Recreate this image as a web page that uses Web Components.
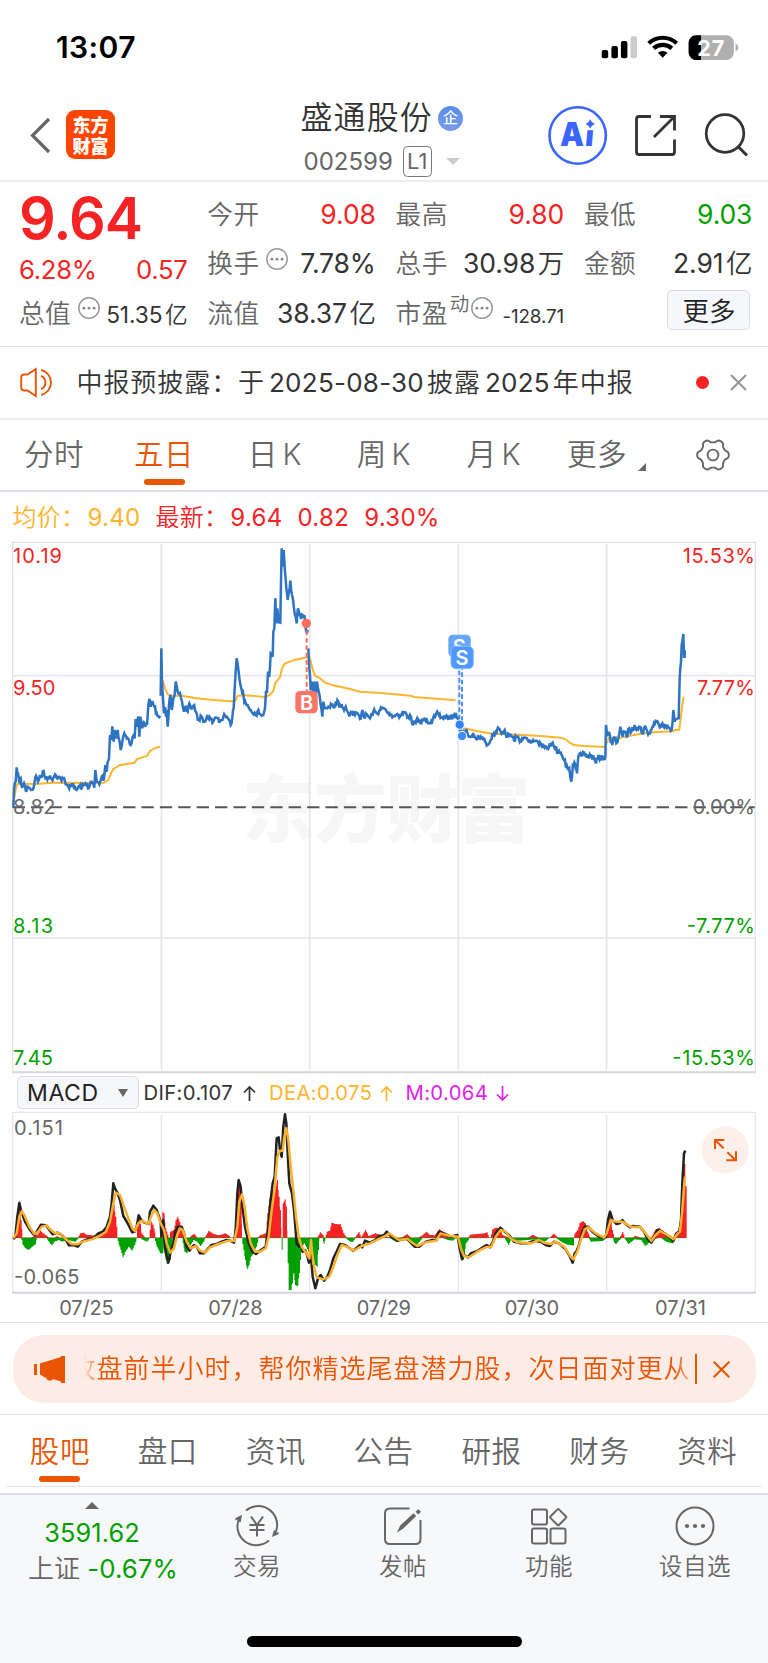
<!DOCTYPE html>
<html lang="zh-CN">
<head>
<meta charset="utf-8">
<meta name="viewport" content="width=device-width">
<title>盛通股份 002599</title>
<style>
html,body{margin:0;background:#fff}
body{width:768px;height:1663px;overflow:hidden;font-family:Inter,"Noto Sans CJK SC",sans-serif;font-weight:350;color:#333;text-autospace:no-autospace}
</style>
</head>
<body>
<stock-app></stock-app>
<script>
const BASE = '*{box-sizing:border-box}:host{display:block}svg{display:block;flex:none;overflow:visible}';
function define(name, css, html, init) {
  const t = document.createElement('template');
  t.innerHTML = '<style>' + BASE + css + '</style>' + html;
  customElements.define(name, class extends HTMLElement {
    connectedCallback() {
      if (this.shadowRoot) return;
      this.attachShadow({ mode: 'open' }).append(t.content.cloneNode(true));
      if (init) init.call(this, this.shadowRoot);
    }
  });
}

define('status-bar', `
:host{height:90px;display:flex;justify-content:space-between;align-items:flex-start;padding:29px 30px 0 56px}
b{font-size:30px;line-height:37px;font-weight:600;color:#000;letter-spacing:.4px}
svg{margin-top:5px}`,
`<b>13:07</b>
<svg width="137" height="28" viewBox="0 0 137 28">
<g transform="translate(.7 0)"><rect x="0" y="16" width="6.5" height="8.3" rx="2"/><rect x="9.7" y="12" width="6.5" height="12.3" rx="2"/><rect x="19.2" y="7" width="6.5" height="17.3" rx="2"/><rect x="28.8" y="2.2" width="6.5" height="22.1" rx="2" fill="#ccc"/></g>
<g transform="translate(.7 0)"><g fill="none" stroke="#000" stroke-width="4.2"><path d="M47 9.3A20.5 20.5 0 0 1 75 9.3"/><path d="M51.9 14.4A13.3 13.3 0 0 1 70.1 14.4"/></g><path d="M56.2 18.8A7 7 0 0 1 65.8 18.8L61 23.8Z"/></g>
<rect x="87.6" y="1.2" width="45.3" height="24.8" rx="7.5" fill="#b0b0b0"/><path d="M100 1.2H95A7.5 7.5 0 0 0 87.6 8.7V18.5A7.5 7.5 0 0 0 95 26H100Z"/><path d="M134.5 9.5C138.3 11 138.3 16 134.5 17.5Z" fill="#b0b0b0"/>
<text x="96.2" y="21.7" font-family="Inter" font-weight="700" font-size="21.5" fill="#fff" textLength="27">27</text></svg>`);

define('app-header', `
:host{height:92px;border-bottom:2px solid #ececec;display:grid;grid-template-columns:300.5px 201.5px 1fr;align-items:start}
.l{display:flex;padding:20px 0 0 30px;gap:15px}
.logo{width:49px;height:49px;border-radius:9px;background:#ff4400;color:#fff;font:900 18px/20.5px "Noto Sans CJK SC",sans-serif;display:flex;flex-direction:column;align-items:center;justify-content:center}
.n{display:flex;align-items:center;gap:5px;height:44px;margin-top:6px;font-size:32px;line-height:44px;color:#333;letter-spacing:1.1px}
.badge{width:25px;height:25px;border-radius:50%;background:linear-gradient(#5a8cec,#769ce8);color:#fff;font-size:15px;line-height:24px;font-weight:500;text-align:center;letter-spacing:0}
.c{display:flex;align-items:center;color:#666;font-size:24px;line-height:30px;padding-left:3px;margin-top:6px;font-weight:400;letter-spacing:0}
.c i{font-style:normal;margin-left:10px;width:29px;height:31px;border:1.3px solid #777;border-radius:4.5px;font-size:22px;line-height:29px;text-align:center}
.tri{margin-left:14.5px;border:7px solid transparent;border-top:7px solid #ccc;border-bottom:0}
.r{display:flex;padding:15px 0 0 46px}`,
`<div class="l"><svg width="21" height="49" viewBox="0 0 21 49"><path d="M19 9L2.5 25.5 19 42" fill="none" stroke="#666" stroke-width="3.2"/></svg><div class="logo"><span>东方</span><span>财富</span></div></div>
<div><div class="n"><span>盛通股份</span><span class="badge">企</span></div><div class="c"><span>002599</span><i>L1</i><span class="tri"></span></div></div>
<div class="r"><svg width="220" height="62" viewBox="0 0 220 62">
<circle cx="29.7" cy="30.5" r="28.2" fill="none" stroke="#3a66ff" stroke-width="2.6"/>
<text x="12" y="41" font-family="Inter" font-weight="900" font-size="33" textLength="24" lengthAdjust="spacingAndGlyphs" fill="#3a66ff">A</text><text x="38" y="41.3" font-family="Inter" font-weight="900" font-size="29" fill="#3a66ff" transform="skewX(-5) translate(2 0)">ı</text><path d="M42.2 14.3Q43.4 17.7 46.8 18.9 43.4 20.1 42.2 23.5 41 20.1 37.6 18.9 41 17.7 42.2 14.3Z" fill="#3a66ff"/>
<g fill="none" stroke="#333" stroke-width="2.8"><path d="M103 11.5H91Q88.5 11.5 88.5 14V47Q88.5 49.5 91 49.5H124Q126.5 49.5 126.5 47V34.5M112 11.5H126.5V25.5M126 12L106 32"/><circle cx="177" cy="28.5" r="18.8" stroke-width="2.7"/><path d="M189.5 41L199 50.5" stroke-width="3"/></g></svg></div>`);

define('info-dot', `:host{width:22px;height:22px;flex:none}`,
`<svg width="22" height="22" viewBox="0 0 22 22"><circle cx="11" cy="11" r="10.2" fill="none" stroke="#999" stroke-width="1.5"/><g fill="#888"><circle cx="5.9" cy="11.2" r="1.4"/><circle cx="11" cy="11.2" r="1.4"/><circle cx="16.1" cy="11.2" r="1.4"/></g></svg>`);

define('quote-cell', `
:host{display:flex;justify-content:space-between;align-items:baseline;height:49.3px;line-height:49.3px;white-space:nowrap}
.k{font-size:25.7px;color:#666;display:flex;align-items:center;letter-spacing:.4px}
.v{font-size:26.5px;color:#333;font-weight:400;letter-spacing:-.1px}
:host([tone=up]) .v{color:#f52323}:host([tone=down]) .v{color:#00a000}
:host([size=m]) .v{font-size:22.7px}:host([size=s]) .v{font-size:18.8px}
`, `<span class="k"><slot name="k"></slot></span><span class="v"><slot></slot></span>`);

define('quote-panel', `
:host{height:165px;border-bottom:1.5px solid #e2e3e8;display:grid;grid-template-columns:168.5px 168.5px 168.5px 168.5px;column-gap:19.8px;padding:8px 0 0 19px}
.big{font-size:57.5px;line-height:58px;height:58px;margin:-1px 0 0 0;font-weight:600;color:#f52323;letter-spacing:-1px}
.p{display:flex;justify-content:space-between;color:#f52323;font-size:25.7px;line-height:45px;height:41.6px;font-weight:400;letter-spacing:-.3px}
info-dot{margin:-10px 0 0 7px}
.sup{font-size:19.5px;margin:-18px 0 0 2px}
.sup + info-dot{margin-left:1px}
button{display:block;margin:1px 2px 0 auto;width:83px;height:40px;border:1.5px solid #dcdde4;border-radius:5px;background:#f6f7fa;font:350 26.5px/36px "Noto Sans CJK SC",sans-serif;color:#222;padding:0}
u{text-decoration:none;font-weight:350;margin-left:2.5px}`,
`<div><div class="big">9.64</div><div class="p"><span>6.28%</span><span>0.57</span></div><quote-cell size="m"><span slot="k">总值</span><info-dot slot="k"></info-dot>51.35<u>亿</u></quote-cell></div>
<div><quote-cell tone="up"><span slot="k">今开</span>9.08</quote-cell><quote-cell><span slot="k">换手</span><info-dot slot="k"></info-dot>7.78%</quote-cell><quote-cell><span slot="k">流值</span>38.37<u>亿</u></quote-cell></div>
<div><quote-cell tone="up"><span slot="k">最高</span>9.80</quote-cell><quote-cell><span slot="k">总手</span>30.98<u>万</u></quote-cell><quote-cell size="s"><span slot="k">市盈</span><span slot="k" class="sup">动</span><info-dot slot="k"></info-dot>-128.71</quote-cell></div>
<div><quote-cell tone="down"><span slot="k">最低</span>9.03</quote-cell><quote-cell><span slot="k">金额</span>2.91<u>亿</u></quote-cell><button>更多</button></div>`);

define('notice-bar', `
:host{height:73px;border-bottom:2px solid #eee;display:flex;align-items:center;padding:0 21px 0 20px;font-size:26px;color:#333}
.t{margin-left:21.5px;display:flex;align-items:center;line-height:40px;flex:1}
.z{letter-spacing:.93px}.d{font-weight:400;margin:0 3px 0 4px;letter-spacing:.25px}
.dot{width:13px;height:13px;border-radius:50%;background:#f52323;margin-right:21px}`,
`<svg width="35" height="29" viewBox="0 0 35 29" fill="none" stroke="#ea5504" stroke-width="1.9"><path d="M15.8 1V28L7.5 22.5H4.5Q1.2 22.5 1.2 19.5V9.5Q1.2 6.5 4.5 6.5H7.5Z"/><path d="M21 2A12.8 12.8 0 0 1 21 27M21 7.8A7.3 7.3 0 0 1 21 21.2"/></svg>
<div class="t"><span class="z">中报预披露：于</span><span class="d">2025-08-30</span><span class="z">披露</span><span class="d">2025</span><span class="z">年中报</span></div>
<span class="dot"></span><svg width="17" height="17" viewBox="0 0 17 17"><path d="M1 1L16 16M16 1L1 16" stroke="#999" stroke-width="2.2"/></svg>`);

define('tab-item', `
:host{display:flex;flex-direction:column;align-items:center;color:#666;font-size:29.5px;white-space:nowrap}
.t{line-height:44px;letter-spacing:.6px}
.b{width:41px;height:6px;border-radius:3px;margin-top:3px}
:host([on]){color:#ea5504}:host([on]) .b{background:#ea5504}`,
`<div class="t"><slot></slot></div><div class="b"></div>`);

define('period-tabs', `
:host{height:72px;border-bottom:2px solid #dfdfe8;display:grid;grid-template-columns:108px 112px 110px 108px 112px 113px 1fr;padding-top:12px}
i{font-style:normal;font-weight:350;margin-left:4.5px;font-size:29.5px}
.m{display:flex}.m:after{content:"";margin:31px 0 0 11px;border:4px solid transparent;border-right-color:#666;border-bottom-color:#666;height:0}
.g{padding:6px 0 0 33px}`,
`<tab-item>分时</tab-item><tab-item on>五日</tab-item><tab-item>日<i>K</i></tab-item><tab-item>周<i>K</i></tab-item><tab-item>月<i>K</i></tab-item><tab-item><span class="m">更多</span></tab-item>
<div class="g"><svg width="34" height="34" viewBox="-17 -17 34 34" fill="none" stroke="#666" stroke-width="1.9"><path class="gear"/><circle r="5.4"/></svg></div>`,
function (r) {
  let d = '';
  for (let i = 0; i < 120; i++) {
    const a = i / 120 * 2 * Math.PI, k = 14.2 + 1.7 * Math.tanh(1.6 * Math.cos(6 * a));
    d += (i ? 'L' : 'M') + (k * Math.cos(a)).toFixed(2) + ' ' + (k * Math.sin(a)).toFixed(2);
  }
  r.querySelector('.gear').setAttribute('d', d + 'Z');
});

define('price-legend', `
:host{height:50px;display:flex;align-items:center;padding:1px 0 0 12.5px;font-size:24px;color:#f52323;line-height:40px}
b{font-weight:350;letter-spacing:.3px}.y{color:#ffb42e}
span{font-weight:400;margin-right:15px;letter-spacing:.3px}b + span{margin-left:2px}`,
`<b class="y">均价：</b><span class="y">9.40</span><b>最新：</b><span>9.64</span><span>0.82</span><span>9.30%</span>`);

const PRICE = [
'40,1178 42,1125 47,1100 50,1057 54,1075 58,1105 62,1090 66,1118 72,1105 78,1130 82,1112 90,1120 98,1124 104,1100 108,1082 114,1100 120,1080 126,1085 131,1068 136,1090 145,1085 155,1092 165,1078 175,1085 182,1092 190,1090 197,1108 205,1115 215,1105 222,1118 230,1125 238,1112 246,1118 254,1110 262,1105 266,1120 275,1100 283,1118 286,1065 290,1100 298,1108 305,1085 312,1092 316,1050 320,1070 323,1040 327,1030 330,960 334,975 337,934 341,980 344,945 348,970 353,945 358,975 362,1005 367,980 373,955 380,970 387,975 392,990 398,965 404,970 407,912 411,935 415,905 418,965 421,905 427,940 434,925 441,930 445,870 448,852 452,875 457,858 463,875 470,893 480,902',
'482,842 484,700 486,800 489,850 492,895 496,880 498,905 500,885 503,935 507,870 511,840 515,885 520,850 524,840 527,800 533,830 540,835 546,860 552,890 557,872 563,890 568,865 573,880 580,872 588,890 596,915 605,905 615,920 622,900 632,912 640,920 650,908 660,918 670,905 680,905 687,915 692,930 697,908 701,880 704,820 707,770 710,730 714,755 718,790 724,820 729,830 733,862 740,870 750,885 758,895 767,900 775,885 783,900 790,900 795,880 798,830 801,830 804,770 808,780 812,715 818,725 820,650 823,640 826,550 829,625 832,580 837,625 841,620 843,500 845,400 848,455 851,405 855,470 859,520 863,555 867,530 871,497 876,540 882,580 887,605 890,625 894,580 899,600 903,612 908,600 913,600 917,640 921,655 923,645',
'925,700 928,760 932,820 936,800 939,840 943,800 947,845 951,800 956,830 960,850 964,880 967,905 970,860 976,880 985,875 995,870 1005,875 1012,855 1020,870 1030,880 1037,875 1045,895 1055,892 1065,900 1073,895 1080,912 1087,885 1092,905 1102,900 1110,910 1120,890 1130,895 1140,885 1152,880 1160,890 1172,898 1182,903 1192,897 1204,900 1214,892 1224,905 1230,900 1236,925 1247,925 1254,912 1264,925 1272,912 1282,918 1294,918 1304,910 1314,895 1324,908 1337,905 1352,910 1362,900 1373,905 1376,930',
'1376,940 1387,960 1400,945 1407,965 1417,960 1427,970 1437,968 1447,965 1455,980 1465,988 1472,975 1477,955 1484,960 1496,940 1504,955 1514,945 1522,965 1532,960 1542,975 1552,965 1564,978 1576,968 1588,980 1600,975 1612,978 1622,985 1634,998 1647,995 1655,985 1664,1000 1674,1010 1684,1018 1692,1035 1700,1050 1708,1060 1714,1100 1719,1045 1723,1042 1727,1060 1731,1075 1735,1025 1744,1022 1752,1012 1762,1025 1772,1022 1782,1030 1788,1045 1795,1020 1802,1030 1812,1028 1816,1025 1818,930 1822,960 1827,950 1832,980 1837,990 1842,965 1849,985 1855,970 1861,935 1868,965 1874,950 1880,965 1887,940 1894,950 1904,930 1912,940 1920,935 1927,955 1934,935 1942,950 1950,955 1957,935 1967,918 1977,930 1987,925 1997,935 2007,938 2015,945 2020,885 2024,920 2030,912 2036,910 2039,790 2043,740 2045,690 2050,657 2052,725 2054,725 2054,705'];
const AVG = [
'43,1150 45,1135 50,1108 70,1107 120,1106 160,1103 210,1103 270,1104 312,1103 325,1095 333,1075 340,1062 358,1051 404,1043 410,1033 442,1022 450,1008 465,999 480,995',
'488,795 495,820 503,838 515,842 545,842 590,850 640,855 690,859 705,859 713,842 740,841 795,846 808,840 820,828 826,803 840,787 846,760 855,745 880,736 925,726',
'930,730 937,760 945,782 960,790 975,803 1000,811 1050,822 1080,830 1152,835 1232,842 1242,846 1367,856',
'1380,938 1402,942 1442,950 1477,956 1552,959 1622,963 1682,968 1697,973 1707,982 1722,990 1752,993 1816,996',
'1820,985 1827,968 1852,972 1872,965 1902,960 1932,955 1972,951 2018,949 2024,945 2038,944 2042,910 2047,870 2051,845'];
const DIF = '40,538 46,530 52,470 58,428 64,455 75,485 90,510 103,526 112,512 123,494 138,496 148,510 158,523 172,518 185,525 195,535 207,556 222,555 233,560 245,545 262,538 280,535 295,520 308,515 320,500 330,470 335,430 340,370 345,385 353,400 360,420 370,468 383,490 397,517 404,515 410,500 416,466 424,480 434,488 446,492 450,455 455,447 460,437 470,450 482,485 484,530 490,480 494,560 500,590 505,608 512,575 520,550 526,515 533,500 545,500 552,520 558,555 568,572 582,555 590,560 600,580 612,580 625,565 635,555 650,552 665,545 680,540 690,542 702,548 707,510 712,400 716,360 722,380 727,440 735,500 745,545 757,575 768,582 780,572 797,560 805,500 812,420 818,370 824,350 830,235 836,232 840,270 845,290 850,200 855,163 859,190 862,260 868,370 876,400 882,450 890,550 897,560 903,555 908,575 915,570 921,585 927,608 932,575 938,650 946,685 954,655 962,645 972,662 982,650 990,630 1000,595 1010,575 1020,552 1035,555 1060,572 1080,555 1087,562 1095,542 1110,548 1125,540 1140,528 1152,526 1160,515 1174,530 1192,542 1220,535 1234,550 1244,560 1257,560 1277,545 1297,540 1309,540 1317,515 1332,520 1352,530 1372,525 1380,570 1386,598 1392,585 1404,592 1412,580 1432,573 1452,560 1460,555 1470,562 1479,545 1487,520 1494,512 1501,503 1514,515 1527,525 1542,545 1562,550 1582,550 1602,542 1622,545 1637,555 1650,558 1662,545 1677,550 1697,568 1710,590 1718,608 1724,580 1729,575 1737,555 1747,515 1755,500 1764,500 1777,515 1797,530 1812,535 1818,530 1824,480 1830,455 1838,480 1849,492 1859,490 1867,480 1877,492 1890,502 1900,498 1920,500 1932,515 1942,535 1954,548 1962,535 1972,510 1987,515 2007,530 2020,543 2028,522 2038,515 2043,480 2047,370 2052,280 2056,272';
const DEA = '40,535 50,520 58,470 66,453 75,470 88,500 103,522 115,515 125,500 140,496 150,508 165,520 180,520 200,540 215,552 232,553 245,546 275,538 300,527 318,515 330,485 340,430 347,398 360,405 372,440 385,475 397,505 405,513 415,490 425,482 445,492 455,465 463,450 472,460 482,490 492,510 500,550 511,578 522,565 530,530 540,505 548,510 560,545 572,565 588,558 600,572 615,578 630,562 655,552 685,542 703,543 712,500 718,425 726,403 734,440 742,505 752,550 765,575 780,575 797,565 806,530 815,450 823,395 832,290 840,272 848,272 853,230 859,205 865,240 872,320 880,390 888,470 896,530 905,560 918,578 928,595 933,540 940,610 950,652 970,658 988,650 1000,620 1012,585 1025,555 1040,560 1062,572 1085,558 1110,550 1130,540 1152,530 1167,520 1182,530 1197,540 1222,536 1237,548 1252,558 1277,547 1307,542 1322,520 1347,527 1374,530 1384,570 1392,588 1407,592 1432,575 1457,562 1474,560 1487,530 1502,510 1517,515 1532,535 1552,547 1592,550 1617,540 1632,548 1652,552 1667,545 1692,560 1712,590 1720,598 1732,575 1744,535 1754,508 1764,502 1787,520 1812,533 1820,520 1832,480 1847,485 1867,485 1892,500 1922,502 1937,520 1954,543 1967,525 1980,513 2002,525 2020,538 2032,522 2040,515 2047,450 2052,380 2055,350';
const RED = ['44,520 50,480 54,470 58,430 62,480 67,525','90,534 110,525 120,512 128,520 140,528 146,534','162,534 170,528 178,534','232,534 240,520 250,518 258,524 285,527 300,515 315,510 322,490 333,470 341,435 346,470 352,530','408,534 412,480 417,470 424,520 435,534','446,534 452,484 458,495 466,525','484,534 487,455 491,460 496,505 505,534','508,534 510,515 520,510 527,480 532,470 538,485 546,520 556,534','570,530 580,522 590,530','612,534 625,513 640,522 655,526 675,520 690,530','700,534 706,480 712,400 717,360 722,380 726,530','770,534 780,525 797,520 802,460 808,415 815,400 822,400 826,380 831,360 836,410 840,450 843,500 844,534','846,534 848,430 854,418 858,440 862,534','950,534 960,517 968,525 972,534','974,534 980,515 988,512 994,488 1005,492 1020,493 1030,520 1040,534','1062,534 1076,516 1082,532 1095,510 1105,528 1125,520 1152,528 1177,534','1202,534 1220,522 1232,534','1252,534 1267,525 1279,515 1287,524 1302,526 1317,508 1332,518 1357,530','1402,534 1410,524 1452,520 1460,517 1467,534','1470,534 1477,508 1487,503 1497,505 1507,525 1527,534','1582,534 1597,524 1617,534','1647,534 1660,521 1674,534','1720,534 1724,520 1732,510 1738,490 1747,483 1755,490 1762,515 1770,534','1814,534 1820,500 1827,455 1832,470 1836,510 1842,534','1857,534 1867,516 1874,534','1897,534 1904,527 1922,534','1952,534 1964,510 1977,503 1987,515 2012,528 2020,534','2020,534 2027,515 2038,510 2042,470 2047,380 2052,312 2055,312 2056,378 2060,378'];
const GREEN = ['64,540 68,555 75,565 85,570 95,560 105,553 110,534','138,534 150,552 155,555 162,545 175,540 185,545 200,540 225,545 235,534','350,534 358,560 368,592 375,575 385,560 395,572 403,555 410,534','424,538 440,545 448,534','462,534 470,560 480,580 487,580 490,534','492,534 497,600 500,612 510,600 515,560 518,534','545,534 553,575 560,580 570,555 580,540 590,545 600,558 610,545 615,534','724,534 730,570 735,600 740,628 746,615 752,590 760,580 768,560 775,534','842,534 845,570 848,534','860,534 863,610 866,690 872,690 876,670 880,640 885,675 892,678 897,640 900,600 905,560 912,550 925,575 935,560 940,600 945,615 950,620 954,570 958,534','966,534 971,552 976,534','1035,534 1050,545 1058,545 1065,534','1167,534 1187,545 1212,540 1227,545 1247,558 1257,545 1267,534','1327,534 1342,540 1357,542 1367,534','1374,534 1382,580 1388,600 1392,590 1397,550 1407,536','1512,534 1525,555 1532,540 1552,542 1582,540 1602,538 1632,545 1647,534','1667,534 1682,545 1697,553 1720,557 1722,534','1764,534 1772,545 1807,543 1814,534','1837,534 1842,548 1847,552 1857,540 1864,534','1872,534 1884,552 1902,538 1922,540 1934,558 1944,550 1957,540 1972,534','1982,534 1997,545 2017,550 2022,534'];

const pairs = s => s.split(' ').map(p => p.split(',').map(Number));
const line = s => 'M' + s.replace(/ /g, 'L');
function noisy(s, amp) {
  const p = pairs(s); let d = 'M' + p[0], seed = 7;
  const rnd = () => (seed = (seed * 16807) % 2147483647) / 2147483647 - .5;
  for (let i = 1; i < p.length; i++) {
    const [x0, y0] = p[i - 1], [x1, y1] = p[i], n = Math.max(1, Math.round((x1 - x0) / 2.6));
    for (let k = 1; k < n; k++) {
      const t = k / n;
      d += 'L' + (x0 + (x1 - x0) * t).toFixed(1) + ' ' + (y0 + (y1 - y0) * t + rnd() * amp).toFixed(1);
    }
    d += 'L' + p[i];
  }
  return d;
}
function bars(s) {
  const p = pairs(s); let d = 'M' + p[0][0] + ' 534';
  for (let i = 1; i < p.length; i++) {
    const [x0, y0] = p[i - 1], [x1, y1] = p[i];
    for (let x = x0; x < x1; x += 3) d += 'V' + (y0 + (y1 - y0) * (x - x0) / (x1 - x0)).toFixed(1) + 'H' + Math.min(x + 3, x1);
  }
  return d + 'V534Z';
}
const label = (x, y, t, w, c, end) => `<text x="${end ? x - w : x}" y="${y}" textLength="${w}" fill="${c}" font-size="60">${t}</text>`;
const VGRID = (a, b) => [484, 929, 1375, 1820].map(x => `<path d="M${x} ${a}V${b}"/>`).join('');

define('price-chart', `:host{height:531px}svg{font-family:Inter;font-weight:400}`, `
<svg width="768" height="531" viewBox="0 381 2304 1593">
<text x="727" y="1264" font-family="Noto Sans CJK SC" font-weight="900" font-size="218" textLength="864" fill="#f6f6f6">东方财富</text>
<g stroke="#e3e6ee" stroke-width="5" fill="none"><path d="M38 382H2266V1971H38Z" stroke="#e0e2e8" stroke-width="4"/><path d="M38 782H2266M38 1569H2266"/>${VGRID(386, 1966)}<path d="M36 1972H2268" stroke="#d6d8e0"/></g>
<path d="M38 1177H2264" stroke="#555" stroke-width="6" stroke-dasharray="37 18.2"/>
<g fill="none" stroke="#ffb42e" stroke-width="6" stroke-linejoin="round">${AVG.map(s => `<path d="${line(s)}"/>`).join('')}</g>
<g fill="none" stroke="#2f73c3" stroke-width="7.5" stroke-linejoin="miter" stroke-miterlimit="3">${PRICE.map(s => `<path d="${noisy(s, 18)}"/>`).join('')}</g>
${label(39, 444, '10.19', 147, '#f52323')}${label(39, 841, '9.50', 127, '#f52323')}${label(39, 1197, '8.82', 127, '#666')}${label(39, 1553, '8.13', 120, '#00a000')}${label(39, 1949, '7.45', 120, '#00a000')}
${label(2265, 444, '15.53%', 217, '#f52323', 1)}${label(2265, 841, '7.77%', 174, '#f52323', 1)}${label(2265, 1197, '0.00%', 187, '#666', 1)}${label(2265, 1553, '-7.77%', 205, '#00a000', 1)}${label(2265, 1949, '-15.53%', 248, '#00a000', 1)}
<g><path d="M920 625V830" stroke="#fb6f62" stroke-width="6" stroke-dasharray="14 8"/><circle cx="919" cy="625" r="14" fill="#fb6f62"/><rect x="886" y="828" width="67" height="67" rx="14" fill="#fb7566"/><text x="920" y="884" font-size="60" font-weight="600" fill="#fff" text-anchor="middle">B</text></g>
<g><path d="M1378 745V930M1386 750V965" stroke="#4a90f8" stroke-width="6" stroke-dasharray="14 8"/><circle cx="1379" cy="929" r="14" fill="#3284fa" stroke="#fff" stroke-width="3"/><circle cx="1386" cy="963" r="14" fill="#3f8cfb" stroke="#fff" stroke-width="3"/><rect x="1345" y="659" width="67" height="67" rx="14" fill="#66a5fc"/><text x="1378" y="716" font-size="60" font-weight="600" fill="#fff" text-anchor="middle">S</text><rect x="1353" y="694" width="67" height="67" rx="14" fill="#4f98ff" stroke="#8cbcff" stroke-width="3"/><text x="1386" y="751" font-size="60" font-weight="600" fill="#fff" text-anchor="middle">S</text></g>
</svg>`);

define('macd-bar', `
:host{height:39px;display:flex;align-items:center;padding:0 0 0 17px;font-size:20.2px;font-weight:400;color:#333}
button{width:122px;height:33px;border:1.5px solid #dcdde4;border-radius:5px;background:#f6f7fa;display:flex;align-items:center;justify-content:space-between;padding:0 10px 0 9px;font:400 23px/30px Inter;color:#222;letter-spacing:.6px}
button:after{content:"";border:5px solid transparent;border-top:8px solid #666;border-bottom:0}
span{display:flex;align-items:center;justify-content:space-between;letter-spacing:.4px}
svg{margin-top:1px}`,
`<button>MACD</button>
<span style="margin-left:4.5px;width:112.5px">DIF:0.107 <svg width="13" height="15" viewBox="0 0 13 15" fill="none" stroke="currentColor" stroke-width="1.7"><path d="M6.5 15V1M1 6.5L6.5 1 12 6.5"/></svg></span>
<span style="margin-left:13px;width:124px;color:#ffb42e">DEA:0.075 <svg width="13" height="15" viewBox="0 0 13 15" fill="none" stroke="currentColor" stroke-width="1.7"><path d="M6.5 15V1M1 6.5L6.5 1 12 6.5"/></svg></span>
<span style="margin-left:12.5px;width:103.5px;color:#e01ee8">M:0.064 <svg width="13" height="15" viewBox="0 0 13 15" fill="none" stroke="currentColor" stroke-width="1.7"><path d="M6.5 0V14M1 8.5L6.5 14 12 8.5"/></svg></span>`);

define('macd-chart', `:host{height:211px;border-bottom:1.5px solid #e2e3e8}svg{font-family:Inter;font-weight:400}`, `
<svg width="768" height="209" viewBox="0 156 2304 627">
<g stroke="#e3e6ee" stroke-width="4" fill="none"><path d="M38 696V157H2266V696"/>${VGRID(165, 692)}<path d="M36 698H2268" stroke="#d3d4dc" stroke-width="6"/></g>
<path d="${RED.map(bars).join('')}" fill="#f52323"/><path d="${GREEN.map(bars).join('')}" fill="#00a000"/>
<path d="M40 533H2058" stroke="#5a6a10" stroke-width="2"/>
<path d="${line(DIF)}" fill="none" stroke="#222" stroke-width="7.5" stroke-linejoin="round"/><path d="${line(DEA)}" fill="none" stroke="#f9b02e" stroke-width="7.5" stroke-linejoin="round"/>
${label(42, 225, '0.151', 147, '#666')}${label(42, 672, '-0.065', 196, '#666')}
${[['07/25', 178, 163], ['07/28', 625, 163], ['07/29', 1070, 163], ['07/30', 1514, 163], ['07/31', 1965, 153]].map(d => label(d[1], 766, d[0], d[2], '#666')).join('')}
<circle cx="2176" cy="270" r="71" fill="#fdf0eb"/><g stroke="#ea5504" stroke-width="6" fill="none"><path d="M2145 267V240H2173M2146 241L2171 265M2208 274V301H2179M2207 301L2182 277"/></g>
</svg>`);

define('promo-banner', `
:host{height:92px;border-bottom:1.5px solid #e2e3e8;padding:12px 12px 0 12.5px}
.p{height:68px;border-radius:31px;background:#fdece5;display:flex;align-items:center;padding:0 26px 0 21px;color:#ea5504}
.t{margin-left:19px;width:609px;overflow:hidden;white-space:nowrap;font-size:26px;line-height:40px;letter-spacing:1px;-webkit-mask:linear-gradient(90deg,transparent,#000 16px,#000 591px,transparent 614px)}
.t span{display:block;margin-left:-14px}
.b{width:2px;height:30px;background:#ea5504;margin:0 16px 0 3px}`,
`<div class="p"><svg width="31" height="27" viewBox="0 0 31 27" fill="#ea5504"><path d="M0 8H3V19H0ZM6 7.5L27 1V0H31V27H27V25.5L19 23Q17 26 13.5 24Q12 21 10 21L6 18.5Z"/></svg>
<div class="t"><span>收盘前半小时，帮你精选尾盘潜力股，次日面对更从容</span></div><i class="b"></i>
<svg width="17" height="17" viewBox="0 0 17 17"><path d="M.7 .7L16.3 16.3M16.3 .7L.7 16.3" stroke="#ea5504" stroke-width="2.1"/></svg></div>`);

define('section-tabs', `
:host{height:78px;padding:15px 6px 0}
.r{display:grid;grid-template-columns:repeat(7,107.9px);height:57px;border-bottom:1.5px solid #e2e3e8}
tab-item{margin-top:-1px}`,
`<div class="r"><tab-item on>股吧</tab-item><tab-item>盘口</tab-item><tab-item>资讯</tab-item><tab-item>公告</tab-item><tab-item>研报</tab-item><tab-item>财务</tab-item><tab-item>资料</tab-item></div>`);

define('nav-item', `
:host{display:flex;flex-direction:column;align-items:center;gap:6px;font-size:23.5px;line-height:30px;color:#666;letter-spacing:.6px}
::slotted(svg){display:block}`, `<slot name="icon"></slot><span><slot></slot></span>`);

define('bottom-nav', `
:host{height:170px;background:#f7f8fa;border-top:2px solid #d8dae4;display:flex;flex-direction:column;align-items:center}
.r{display:grid;grid-template-columns:184px 146px 146px 146px 146px;width:768px;height:141px;padding-top:7px}
.q{text-align:center;color:#00a000;font-size:25.3px;font-weight:400;line-height:31px;letter-spacing:.1px}
.q i{display:block;width:0;margin:0 auto 8px;border:7px solid transparent;border-bottom:7px solid #666;border-top:0}
.q b{font-weight:350;color:#666;font-size:26px;margin-right:7px}
.q .s{margin-top:5px;padding-left:22px;font-size:25.8px}
.h{width:275px;height:10.5px;border-radius:6px;background:#000}
nav-item{padding-top:4px}
svg{fill:none;stroke:#666;stroke-width:2}`,
`<div class="r"><div class="q"><i></i><div>3591.62</div><div class="s"><b>上证</b>-0.67%</div></div>
<nav-item><svg slot="icon" width="44" height="40" viewBox="-22 -20 44 40"><path d="M-11 -15.5A19 19 0 0 1 17.5 8.8M12 14.6A19 19 0 0 1 -17.3 -8.6"/><path d="M-21.5 -6.5L-16.3 -9.3 -17.3 -4M21.5 7L16.5 9.3 17.8 4.5"/><path d="M-6 -9.5L0 -1 6 -9.5M-7.5 -1H7.5M-7.5 4H7.5M0 -1V10.5"/></svg>交易</nav-item>
<nav-item><svg slot="icon" width="40" height="40" viewBox="0 0 40 40"><path d="M26.5 2.5H7Q2 2.5 2 7.5V33Q2 38 7 38H32.5Q37.5 38 37.5 33V14"/><path d="M14 26.5L17.2 19.5 30.5 7.3 33.2 10 20 22.8Z" fill="#666" stroke="none"/><path d="M32.5 5.7L35.2 3.2 38 5.8 35.3 8.5Z" fill="#666" stroke="none"/></svg>发帖</nav-item>
<nav-item><svg slot="icon" width="38" height="40" viewBox="0 0 38 40"><rect x="2" y="3.6" width="15" height="15" rx="2"/><rect x="2" y="22.6" width="15" height="15" rx="2"/><rect x="20.5" y="22.6" width="15" height="15" rx="2"/><path d="M27.5 3.4Q28.2 2.8 28.9 3.4L36 10.5Q36.6 11.2 36 11.9L28.9 19Q28.2 19.6 27.5 19L20.4 11.9Q19.8 11.2 20.4 10.5Z"/></svg>功能</nav-item>
<nav-item><svg slot="icon" width="40" height="40" viewBox="-20 -20 40 40"><circle r="18.5"/><g fill="#666" stroke="none"><circle cx="-8" r="2.1"/><circle r="2.1"/><circle cx="8" r="2.1"/></g></svg>设自选</nav-item></div>
<div class="h"></div>`);

define('stock-app', `:host{width:768px;height:1663px}`,
`<status-bar></status-bar><app-header></app-header><quote-panel></quote-panel><notice-bar></notice-bar><period-tabs></period-tabs><price-legend></price-legend><price-chart></price-chart><macd-bar></macd-bar><macd-chart></macd-chart><promo-banner></promo-banner><section-tabs></section-tabs><bottom-nav></bottom-nav>`);
</script>
</body>
</html>
